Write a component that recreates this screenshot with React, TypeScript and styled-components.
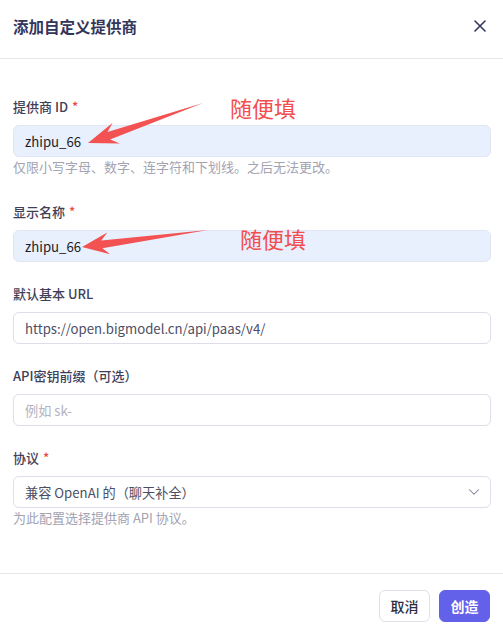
import React from 'react'
import styled, { createGlobalStyle } from 'styled-components'
import { ChevronDown } from 'lucide-react'

const GlobalStyle = createGlobalStyle`
  html, body {
    margin: 0;
    padding: 0;
    background: #ffffff;
  }
  * {
    box-sizing: border-box;
  }
`

const FONT = `"Noto Sans CJK SC", "Noto Sans", sans-serif`

const Dialog = styled.div`
  position: relative;
  width: 503px;
  height: 626px;
  background: #ffffff;
  font-family: ${FONT};
  display: flex;
  flex-direction: column;
  overflow: hidden;
`

const Header = styled.header`
  height: 59px;
  padding: 16px 13px 0 13px;
  display: flex;
  align-items: flex-start;
  justify-content: space-between;
  border-bottom: 1px solid #e6e6ec;
`

const Title = styled.h2`
  margin: 0;
  font-size: 15.5px;
  line-height: 20px;
  font-weight: 700;
  color: #34355a;
`

const CloseButton = styled.button`
  width: 16px;
  height: 16px;
  margin-top: 2px;
  margin-right: 2px;
  padding: 0;
  border: none;
  background: transparent;
  display: flex;
  align-items: center;
  justify-content: center;
  color: #34355a;
  cursor: pointer;
`

const Body = styled.div`
  flex: 1;
  padding: 39px 12px 0 13px;
  display: flex;
  flex-direction: column;
  gap: 23px;
`

const Field = styled.div`
  display: flex;
  flex-direction: column;
`

const Label = styled.label`
  font-size: 13px;
  line-height: 18px;
  font-weight: 500;
  color: #3f4058;
  margin-bottom: 9px;
`

const Required = styled.span`
  color: #ef4444;
  margin-left: 4px;
`

const Input = styled.div<{ $filled?: boolean; $placeholder?: boolean }>`
  height: 32px;
  padding: 0 11px;
  display: flex;
  align-items: center;
  justify-content: space-between;
  border-radius: 6px;
  border: 1px solid ${p => (p.$filled ? '#e0e6f4' : '#dedde9')};
  background: ${p => (p.$filled ? '#e8f0fe' : '#ffffff')};
  font-size: 13.2px;
  color: ${p => (p.$placeholder ? '#b3b3c0' : p.$filled ? '#1d1d28' : '#4d4e63')};
`

const SelectIcon = styled.span`
  display: flex;
  margin-right: -4px;
  color: #7d7d95;
`

const Help = styled.p`
  margin: 1px 0 4px 0;
  font-size: 13px;
  line-height: 18px;
  color: #a3a3b2;
`

const Footer = styled.footer`
  height: 53px;
  padding: 16px 13px 0 13px;
  border-top: 1px solid #e6e6ec;
  display: flex;
  justify-content: flex-end;
  align-items: flex-start;
  gap: 9px;
`

const Button = styled.button<{ $primary?: boolean }>`
  height: 32px;
  width: 51px;
  padding: 0;
  border-radius: 6px;
  font-family: ${FONT};
  font-size: 14px;
  font-weight: ${p => (p.$primary ? 700 : 500)};
  border: 1px solid ${p => (p.$primary ? '#6360ea' : '#e0e0e8')};
  background: ${p => (p.$primary ? '#6360ea' : '#ffffff')};
  color: ${p => (p.$primary ? '#ffffff' : '#2c2d40')};
`

const Overlay = styled.svg`
  position: absolute;
  left: 0;
  top: 0;
  width: 503px;
  height: 626px;
  pointer-events: none;
`

const Note = styled.span<{ $x: number; $y: number }>`
  position: absolute;
  left: ${p => p.$x}px;
  top: ${p => p.$y}px;
  font-family: "Noto Sans CJK SC", sans-serif;
  font-size: 22px;
  line-height: 24px;
  color: #f34e4e;
  pointer-events: none;
`

type Pt = [number, number]

// tapered screenshot-style arrow, tail thin, head wide
function arrowPoints(tail: Pt, tip: Pt, headLen: number, headW: number, shaftW: number, notch: number) {
  const dx = tip[0] - tail[0]
  const dy = tip[1] - tail[1]
  const len = Math.hypot(dx, dy)
  const ux = dx / len
  const uy = dy / len
  const nx = -uy
  const ny = ux
  const at = (back: number, side: number): Pt => [tip[0] - ux * back + nx * side, tip[1] - uy * back + ny * side]
  const pts: Pt[] = [
    tail,
    at(notch, shaftW),
    at(headLen, headW),
    tip,
    at(headLen, -headW),
    at(notch, -shaftW),
  ]
  return pts.map(p => `${p[0].toFixed(1)},${p[1].toFixed(1)}`).join(' ')
}

const App: React.FC = () => {
  return (
    <>
      <GlobalStyle />
      <Dialog>
        <Header>
          <Title>添加自定义提供商</Title>
          <CloseButton aria-label="close">
            <svg width="12" height="12" viewBox="0 0 12 12">
              <path d="M1 1 L11 11 M11 1 L1 11" stroke="currentColor" strokeWidth="1.6" strokeLinecap="round" />
            </svg>
          </CloseButton>
        </Header>

        <Body>
          <Field>
            <Label>
              提供商 ID<Required>*</Required>
            </Label>
            <Input $filled>zhipu_66</Input>
            <Help>仅限小写字母、数字、连字符和下划线。之后无法更改。</Help>
          </Field>

          <Field>
            <Label>
              显示名称<Required>*</Required>
            </Label>
            <Input $filled>zhipu_66</Input>
          </Field>

          <Field>
            <Label>默认基本 URL</Label>
            <Input>https://open.bigmodel.cn/api/paas/v4/</Input>
          </Field>

          <Field>
            <Label>API密钥前缀（可选）</Label>
            <Input $placeholder>例如 sk-</Input>
          </Field>

          <Field>
            <Label>
              协议<Required>*</Required>
            </Label>
            <Input>
              兼容 OpenAI 的（聊天补全）
              <SelectIcon>
                <ChevronDown size={18} strokeWidth={1.4} />
              </SelectIcon>
            </Input>
            <Help>为此配置选择提供商 API 协议。</Help>
          </Field>
        </Body>

        <Footer>
          <Button>取消</Button>
          <Button $primary>创造</Button>
        </Footer>

        <Overlay viewBox="0 0 503 626">
          <polygon points={arrowPoints([203, 103], [88, 143], 30, 11, 4, 22)} fill="#f25252" />
          <polygon points={arrowPoints([208, 230], [82, 247], 27, 11, 4, 20)} fill="#f25252" />
        </Overlay>
        <Note $x={230} $y={95}>随便填</Note>
        <Note $x={240} $y={226}>随便填</Note>
      </Dialog>
    </>
  )
}

export default App
